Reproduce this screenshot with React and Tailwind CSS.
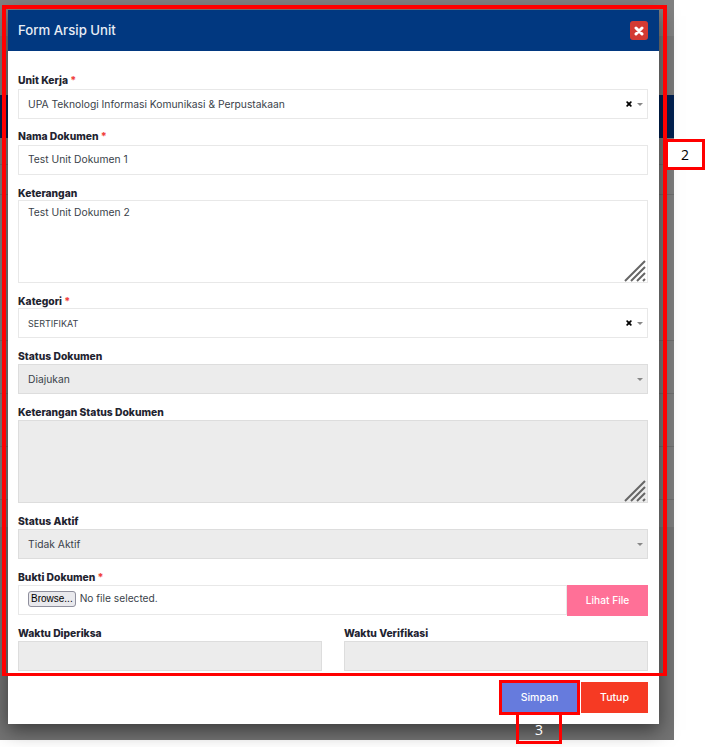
import React from "react";

const Label = ({ text, required, tight, raised }) => (
  <label
    className={`flex items-end text-[10.3px] font-extrabold text-[#1f2430] ${tight ? "h-[25px] leading-[14px]" : "h-[26px]"} ${
      raised ? "leading-[18px]" : ""
    } ${!tight && !raised ? "leading-[16px]" : ""}`}
  >
    <span className="whitespace-pre">
      {text}
      {required && <span className="text-[#f0403c]"> *</span>}
    </span>
  </label>
);

const TimesIcon = ({ className }) => (
  <svg viewBox="0 0 10 10" className={className}>
    <path d="M2 2 L8 8 M8 2 L2 8" stroke="currentColor" strokeWidth="3" strokeLinecap="round" />
  </svg>
);

const Caret = () => <span className="ml-[5px] border-x-[3px] border-t-[3px] border-x-transparent border-t-[#888888]" />;

const SelectBox = ({ value, clearable, disabled, small }) => (
  <div
    className={`flex h-[30px] items-center border pr-[4px] pl-[9px] ${
      disabled ? "border-[#dddddd] bg-[#ececec]" : "border-[#e8e8e8] bg-white"
    }`}
  >
    <span className={`flex-1 ${small ? "pt-[2px] text-[9px]" : "pt-[1px] text-[10.3px]"} text-[#3a3f4a]`}>{value}</span>
    {clearable && <TimesIcon className="h-[6px] w-[6px] text-black" />}
    <Caret />
  </div>
);

const TextInput = ({ value, disabled }) => (
  <input
    readOnly
    value={value}
    className={`block h-[30px] w-full border px-[9px] pb-[2px] text-[10.3px] text-[#3a3f4a] outline-none ${
      disabled ? "border-[#dddddd] bg-[#ececec]" : "border-[#e8e8e8] bg-white"
    }`}
  />
);

const TextArea = ({ value, disabled }) => (
  <div className="relative">
    <textarea
      readOnly
      value={value}
      className={`block h-[83px] w-full resize-none border px-[9px] py-[4px] text-[10.3px] text-[#3a3f4a] outline-none ${
        disabled ? "border-[#dddddd] bg-[#ececec]" : "border-[#e8e8e8] bg-white"
      }`}
    />
    <svg viewBox="0 0 22 22" className="absolute right-[2px] bottom-[1px] h-[22px] w-[22px] text-[#666666]">
      <path d="M1 21 L21 1 M7 21 L21 7 M13 21 L21 13 M19 21 L21 19" stroke="currentColor" strokeWidth="2" fill="none" />
    </svg>
  </div>
);

export default function App() {
  return (
    <div className="relative h-[747px] w-[706px] overflow-hidden bg-white font-['Inter',sans-serif]">
      {/* dimmed page behind the modal */}
      <div className="flex h-[740px] w-[674px] flex-col">
        <div className="h-[36px] bg-[#808080]" />
        <div className="h-[59px] bg-[#787878]" />
        <div className="h-[43px] bg-[#012050]" />
        <div className="h-[27px] border-b border-[#6e6e6e] bg-[#7c7c7c]" />
        <div className="h-[30px] border-b border-[#6e6e6e] bg-[#7c7c7c]" />
        <div className="h-[146px] border-b border-[#6e6e6e] bg-[#7c7c7c]" />
        <div className="h-[53px] border-b border-[#6e6e6e] bg-[#7c7c7c]" />
        <div className="h-[53px] border-b border-[#6e6e6e] bg-[#7c7c7c]" />
        <div className="h-[53px] border-b border-[#6e6e6e] bg-[#7c7c7c]" />
        <div className="h-[27px] bg-[#7c7c7c]" />
        <div className="flex-1 bg-[#737373]" />
      </div>

      <div className="absolute top-[10px] left-2 flex h-[714px] w-[651px] flex-col bg-white shadow-[0_6px_18px_rgba(0,0,0,0.5)]">
        <div className="flex h-[41px] items-center justify-between bg-[#013880] pr-[11px] pl-[10px]">
          <h4 className="text-[13.2px] font-medium text-[#e8edf5]">Form Arsip Unit</h4>
          <button className="flex h-[19px] w-[18px] items-center justify-center rounded-[3px] bg-[#d33a33] text-white">
            <TimesIcon className="h-[10px] w-[10px]" />
          </button>
        </div>

        <div className="h-[621px] overflow-hidden pt-[12px] pr-[11px] pl-[10px]">
          <Label text="Unit Kerja" required raised />
          <SelectBox value="UPA Teknologi Informasi Komunikasi & Perpustakaan" clearable />
          <Label text="Nama Dokumen" required raised />
          <TextInput value="Test Unit Dokumen 1" />
          <Label text="Keterangan" tight />
          <TextArea value="Test Unit Dokumen 2" />
          <Label text="Kategori" required tight />
          <SelectBox value="SERTIFIKAT" clearable small />
          <Label text="Status Dokumen" />
          <SelectBox value="Diajukan" disabled />
          <Label text="Keterangan Status Dokumen" />
          <TextArea value="" disabled />
          <Label text="Status Aktif" />
          <SelectBox value="Tidak Aktif" disabled />
          <Label text="Bukti Dokumen" required />
          <div className="flex h-[30px]">
            <div className="flex flex-1 items-center gap-[4px] border border-[#e8e8e8] pb-[2px] pl-[9px]">
              <span className="h-[16px] rounded-[3px] border border-[#8f8f9d] bg-[#e9e9ed] px-[2px] font-['Liberation_Sans',sans-serif] text-[10px] leading-[14px] text-black">
                Browse...
              </span>
              <span className="text-[10.2px] text-[#3a3f4a]">No file selected.</span>
            </div>
            <button className="h-[31px] w-[81px] bg-[#ff7097] text-[10.2px] font-medium text-white">Lihat File</button>
          </div>
          <div className="grid grid-cols-2 gap-[22px]">
            <div>
              <Label text="Waktu Diperiksa" />
              <TextInput value="" disabled />
            </div>
            <div>
              <Label text="Waktu Verifikasi" />
              <TextInput value="" disabled />
            </div>
          </div>
        </div>

        <div className="flex h-[52px] justify-end gap-[4px] pt-[10px] pr-[11px]">
          <button className="h-[31px] w-[75px] bg-[#667bdd] text-[10.5px] font-medium text-white">Simpan</button>
          <button className="h-[31px] w-[67px] bg-[#f63a23] text-[10.5px] font-medium text-white">Tutup</button>
        </div>
      </div>

      {/* annotation boxes drawn over the screenshot */}
      <div className="absolute top-[5px] left-[2px] h-[671px] w-[665px] border-[4px] border-b-[3px] border-[#ff0000]" />
      <div className="absolute top-[139px] left-[665px] flex h-[31px] w-[40px] items-center justify-center border-[3px] border-[#ff0000] bg-white font-['Open_Sans',sans-serif] text-[14px] text-black">
        2
      </div>
      <div className="absolute top-[680px] left-[499px] h-[35px] w-[81px] border-[3px] border-[#ff0000]" />
      <div className="absolute top-[715px] left-[516px] flex h-[29px] w-[46px] items-center justify-center border-[3px] border-t-0 border-[#ff0000] pt-[2px] font-['Open_Sans',sans-serif] text-[14px] text-white">
        3
      </div>
    </div>
  );
}
